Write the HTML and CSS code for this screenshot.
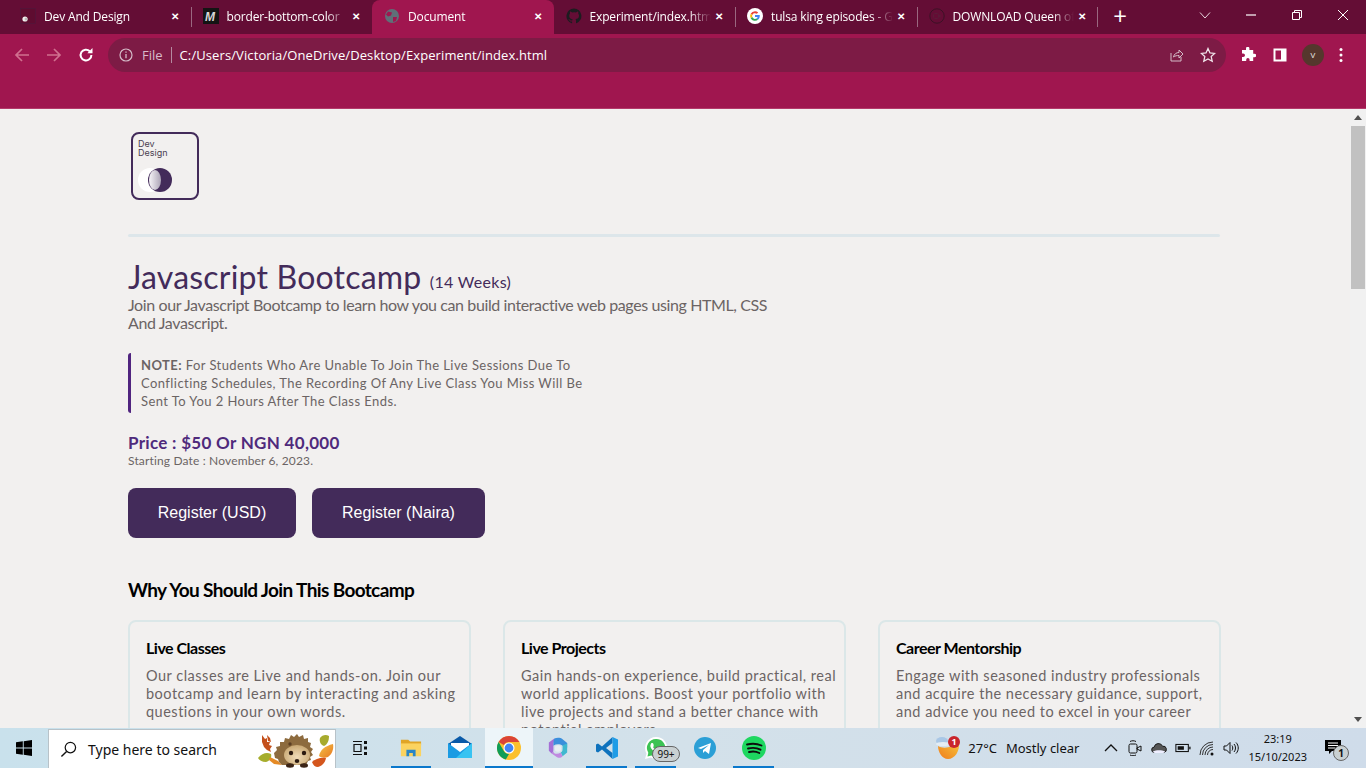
FILE: index.html
```html
<!DOCTYPE html>
<html lang="en">
<head>
<meta charset="utf-8">
<title>Document</title>
<link rel="stylesheet" href="styles.css">
</head>
<body>
<header class="browser">
  <div class="tabstrip">
    <div class="tab first">
      <svg class="fav" viewBox="0 0 16 16"><rect x=".5" y=".5" width="15" height="15" fill="#5e0c30" stroke="#4a1a3e" stroke-width=".5"/><circle cx="5" cy="11" r="2.600" fill="#f1f0ee"/><circle cx="6" cy="11" r="1.500" fill="#bbb"/></svg>
      <span class="tab-title">Dev And Design</span><span class="x">✕</span>
    </div>
    <div class="tab sep">
      <svg class="fav" viewBox="0 0 16 16"><rect width="16" height="16" fill="#141414"/><text x="2" y="13" class="m">M</text></svg>
      <span class="tab-title">border-bottom-color</span><span class="x">✕</span>
    </div>
    <div class="tab active">
      <svg class="fav" viewBox="0 0 16 16"><circle cx="8" cy="8" r="7" fill="#5f6f78"/><path d="M4 3.500l4 1-1 3-3 1-2-2zM9 9l4 0-1 4-3 1z" fill="#a0164f"/></svg>
      <span class="tab-title">Document</span><span class="x">✕</span>
    </div>
    <div class="tab">
      <svg class="fav" viewBox="0 0 16 16"><path d="M8 .5a7.600 7.600 0 0 0-2.400 14.800c.4.100.5-.2.500-.4v-1.400c-2.100.5-2.600-1-2.600-1-.3-.9-.8-1.100-.8-1.100-.7-.5 0-.5 0-.5.800.1 1.200.8 1.200.8.700 1.200 1.800.9 2.300.7.100-.5.300-.9.500-1.100-1.700-.2-3.500-.8-3.500-3.700 0-.8.300-1.500.8-2-.1-.2-.3-1 .1-2 0 0 .6-.2 2.100.8a7 7 0 0 1 3.800 0c1.500-1 2.100-.8 2.100-.8.400 1 .2 1.800.1 2 .5.500.8 1.200.8 2 0 2.900-1.800 3.500-3.500 3.700.3.200.5.700.5 1.400v2.100c0 .2.100.5.500.4A7.600 7.600 0 0 0 8 .5z" fill="#1d1c20"/></svg>
      <span class="tab-title">Experiment/index.html</span><span class="x">✕</span>
    </div>
    <div class="tab sep">
      <svg class="fav" viewBox="0 0 16 16"><circle cx="8" cy="8" r="8" fill="#fff"/><path d="M8 3.200a4.800 4.800 0 0 1 3.200 1.200L9.800 5.800A2.900 2.900 0 0 0 5.300 7L3.700 5.800A4.800 4.800 0 0 1 8 3.200z" fill="#ea4335"/><path d="M3.700 5.800 5.300 7a3 3 0 0 0 0 2l-1.600 1.200a4.800 4.800 0 0 1 0-4.400z" fill="#fbbc05"/><path d="M5.300 9a2.900 2.900 0 0 0 4.300 1.500l1.500 1.200A4.800 4.800 0 0 1 3.700 10.200z" fill="#34a853"/><path d="M12.800 8c0-.3 0-.6-.1-.9H8V9h2.700a2.400 2.400 0 0 1-1.100 1.500l1.500 1.200A4.800 4.800 0 0 0 12.800 8z" fill="#4285f4"/></svg>
      <span class="tab-title">tulsa king episodes - Google</span><span class="x">✕</span>
    </div>
    <div class="tab sep last">
      <svg class="fav" viewBox="0 0 16 16"><circle cx="8" cy="8" r="7.200" fill="none" stroke="#3c1226" stroke-width="1"/><rect x="4.500" y="5.500" width="5" height="5" rx="1" fill="none" stroke="#5c1a38"/><path d="M9.500 7.500l2-1.200v3.400l-2-1.200z" fill="#5c1a38"/></svg>
      <span class="tab-title">DOWNLOAD Queen of</span><span class="x">✕</span>
    </div>
    <span class="new-tab">+</span>
    <div class="win-ctrls">
      <svg class="w" viewBox="0 0 12 12"><path d="M1 3.500l5 5.500 5-5.500" fill="none" stroke="#e8d5dd"/></svg>
      <svg class="w" viewBox="0 0 12 12"><path d="M1 6h10" stroke="#fff" stroke-width="1.200"/></svg>
      <svg class="w" viewBox="0 0 12 12"><path d="M1.500 3.500h7v7h-7zM3.500 3.500v-2h7v7h-2" fill="none" stroke="#fff"/></svg>
      <svg class="w" viewBox="0 0 12 12"><path d="M1 1l10 10M11 1L1 11" stroke="#fff"/></svg>
    </div>
  </div>
  <div class="toolbar">
    <svg class="nav" viewBox="0 0 16 16"><path d="M15 8H2M8 2 2 8l6 6" fill="none" stroke="#d0708f" stroke-width="1.700"/></svg>
    <svg class="nav" viewBox="0 0 16 16"><path d="M1 8h13M8 2l6 6-6 6" fill="none" stroke="#d0708f" stroke-width="1.700"/></svg>
    <svg class="nav" viewBox="0 0 16 16"><path d="M13.400 8a5.400 5.400 0 1 1-1.600-3.800" fill="none" stroke="#fff" stroke-width="2"/><path d="M14.500 1v5.200H9.300z" fill="#fff"/></svg>
    <div class="omnibox">
      <svg class="info" viewBox="0 0 14 14"><circle cx="7" cy="7" r="6" fill="none" stroke="#d4bcc8" stroke-width="1.200"/><path d="M7 6v4.200M7 3.500v1.300" stroke="#d4bcc8" stroke-width="1.300"/></svg>
      <span class="scheme">File</span>
      <span class="url">C:/Users/Victoria/OneDrive/Desktop/Experiment/index.html</span>
      <svg class="omni-ico" viewBox="0 0 16 16"><path d="M3 6v8h10v-4M5.500 10c.5-3 3-4.500 5.500-4.500V3l4 4-4 4V8.500c-2 0-4 .3-5.500 1.500z" fill="none" stroke="#d4bcc8"/></svg>
      <svg class="omni-ico" viewBox="0 0 16 16"><path d="M8 1.500l2 4.400 4.700.5-3.500 3.200 1 4.700L8 11.900l-4.200 2.400 1-4.700L1.300 6.400 6 5.900z" fill="none" stroke="#f0e4ea" stroke-width="1.300"/></svg>
    </div>
    <svg class="tool" viewBox="0 0 16 16"><path d="M6 1.500a1.700 1.700 0 0 1 3.400 0V3h3.800v3.700h1.200a1.800 1.800 0 0 1 0 3.600h-1.200V14H9.600v-1.200a1.700 1.700 0 0 0-3.400 0V14H2V10h1.200a1.800 1.800 0 0 0 0-3.600H2V3h4z" fill="#fff"/></svg>
    <svg class="tool" viewBox="0 0 16 16"><rect x="1.500" y="1.500" width="13" height="13" fill="#fff"/><rect x="3.500" y="3.500" width="5.500" height="9" fill="#a0164f"/></svg>
    <span class="avatar">V</span>
    <svg class="dots" viewBox="0 0 4 16"><circle cx="2" cy="2.500" r="1.500" fill="#fff"/><circle cx="2" cy="8" r="1.500" fill="#fff"/><circle cx="2" cy="13.500" r="1.500" fill="#fff"/></svg>
  </div>
  <div class="bookmarks"></div>
</header>

<div class="viewport">
  <main class="page">
    <div class="logo">
      <span class="logo-text">Dev<br>Design</span>
      <span class="logo-mark"></span>
    </div>
    <hr class="rule">
    <h1 class="title">Javascript Bootcamp <small>(14 Weeks)</small></h1>
    <p class="lead">Join our Javascript Bootcamp to learn how you can build interactive web pages using HTML, CSS And Javascript.</p>
    <p class="note"><b>NOTE:</b> For Students Who Are Unable To Join The Live Sessions Due To Conflicting Schedules, The Recording Of Any Live Class You Miss Will Be Sent To You 2 Hours After The Class Ends.</p>
    <p class="price">Price : $50 Or NGN 40,000</p>
    <p class="date">Starting Date : November 6, 2023.</p>
    <div class="actions">
      <a class="btn usd">Register (USD)</a>
      <a class="btn ngn">Register (Naira)</a>
    </div>
    <h2 class="why">Why You Should Join This Bootcamp</h2>
    <section class="cards">
      <article class="card">
        <h3>Live Classes</h3>
        <p>Our classes are Live and hands-on. Join our bootcamp and learn by interacting and asking questions in your own words.</p>
      </article>
      <article class="card">
        <h3>Live Projects</h3>
        <p>Gain hands-on experience, build practical, real world applications. Boost your portfolio with live projects and stand a better chance with potential employers.</p>
      </article>
      <article class="card">
        <h3>Career Mentorship</h3>
        <p>Engage with seasoned industry professionals and acquire the necessary guidance, support, and advice you need to excel in your career</p>
      </article>
    </section>
  </main>
  <div class="scrollbar">
    <span class="arrow up"></span>
    <span class="thumb"></span>
    <span class="track"></span>
    <span class="arrow down"></span>
  </div>
</div>

<footer class="taskbar">
  <svg class="start" viewBox="0 0 16 16"><path d="M0 2.300 6.800 1.300V7.500H0zM7.700 1.200 16 0v7.500H7.700zM0 8.400h6.800v6.300L0 13.700zM7.700 8.400H16V16l-8.300-1.200z" fill="#000"/></svg>
  <div class="search">
    <svg class="lens" viewBox="0 0 18 18"><circle cx="11" cy="7" r="5.500" fill="none" stroke="#111" stroke-width="1.300"/><path d="M7 11l-5.500 5.500" stroke="#111" stroke-width="1.500"/></svg>
    <span class="search-text">Type here to search</span>
    <svg class="hog" viewBox="0 0 78 40">
      <defs>
        <radialGradient id="hogface" cx=".5" cy=".6" r=".6"><stop offset="0" stop-color="#f0dcb8"/><stop offset="1" stop-color="#c9a873"/></radialGradient>
        <linearGradient id="leaf" x1="0" y1="0" x2="1" y2="1"><stop offset="0" stop-color="#f3c24a"/><stop offset="1" stop-color="#e8791f"/></linearGradient>
      </defs>
      <path d="M5 6l3 4 2-1 0 4 3 0-1 3 3 1-2 3 1 3-4-2-3-3-2-5zM10 6l3 3 1 4-3-1z" fill="#c4501c"/>
      <path d="M1 29c4-5 9-6 13-4 1 3-1 7-5 8-4 0-7-2-8-4z" fill="#a6ad2c"/>
      <path d="M13 28l8 4 4 4-8-1-5-4z" fill="#e58a25"/>
      <path d="M17 24l3-3-1-3 4-1 0-4 4 0 1-4 4 1 2-4 3 2 3-3 2 3 4-2 1 4 4-1 0 4 3 1-1 4 3 2-2 3 2 3-3 2 1 3-3 1-2 4H25l-3-3-1-3-3-1z" fill="#8d6b3e"/>
      <ellipse cx="40" cy="26" rx="13" ry="10" fill="url(#hogface)"/>
      <circle cx="33" cy="15" r="1.700" fill="#5c3f22"/>
      <circle cx="34" cy="24" r="2.200" fill="#2b1a10"/><circle cx="47" cy="24" r="2.200" fill="#2b1a10"/><ellipse cx="40" cy="32" rx="2.300" ry="2" fill="#2b1a10"/>
      <ellipse cx="33" cy="36.500" rx="4" ry="2.200" fill="#3b2416"/><ellipse cx="47" cy="36.500" rx="4" ry="2.200" fill="#3b2416"/>
      <path d="M63 9c2-3 6-4 9-2 0 4-1 8-5 10-3-1-5-4-4-8z" fill="#a7ab2e"/>
      <path d="M62 27c1-6 6-10 14-12 1 5-1 10-5 13-3 1-7 1-9-1z" fill="url(#leaf)"/>
      <path d="M55 33c3-3 9-5 14-4-1 5-4 8-8 9-3 0-5-2-6-5z" fill="#d4561d"/>
    </svg>
  </div>
  <svg class="tv" viewBox="0 0 16 16"><path d="M1 1.500h9M1 14.500h9M2 4.500h7v7H2z" fill="none" stroke="#111" stroke-width="1.200"/><rect x="12" y="1" width="3" height="3" fill="#111"/><rect x="12" y="6.500" width="3" height="3" fill="#111"/><rect x="12" y="12" width="3" height="3" fill="#111"/></svg>
  <div class="pin running folder"><svg class="app small" viewBox="0 0 24 24"><path d="M1 3h8l2 2h12v4H1z" fill="#e0a526"/><path d="M1 7h22v14H1z" fill="#fbd35f"/><path d="M7 21v-7h10v7h-3v-3.500h-4V21z" fill="#2a86c6"/></svg></div>
  <div class="pin mail"><svg class="app" viewBox="0 0 24 24"><path d="M0 8 12 0l12 8v3H0z" fill="#0a5aa8"/><path d="M3 7h18v7l-9 5-9-5z" fill="#fff"/><path d="M0 7l12 9 12-9v15H0z" fill="#1a9be3"/><path d="M24 7v15H8z" fill="#38c3f2"/></svg></div>
  <div class="pin running chrome"><svg class="app" viewBox="0 0 24 24"><circle cx="12" cy="12" r="12" fill="#fbc02d"/><path d="M12 0a12 12 0 0 1 10.400 6H12a6 6 0 0 0-5.200 3L1.600 6A12 12 0 0 1 12 0z" fill="#db4437"/><path d="M1.600 6l5.200 9a6 6 0 0 0 5.200 3l-3.200 5.600A12 12 0 0 1 1.600 6z" fill="#0f9d58"/><circle cx="12" cy="12" r="5.500" fill="#fff"/><circle cx="12" cy="12" r="4.400" fill="#4285f4"/></svg></div>
  <div class="pin m365"><svg class="app small" viewBox="0 0 24 24"><path d="M8 1.500 2 6v9l3 3c2-1 2-3 2-5V9c0-3 1-5 1-7.500z" fill="#a56fd6"/><path d="M8 1.500c3-1 7-1 9 1l5 4v5l-5-2c-3-2-7-2-10 0 0-3 0-6 1-8z" fill="#3a8fdc"/><path d="M22 7v10l-5 4-2-4c2-1 2-3 2-5V9z" fill="#3fb8cf"/><path d="M5 18l6 4c2 1 4 1 6-1l-2-4c-3 2-7 2-8-1z" fill="#c08ae0"/><circle cx="12" cy="12.500" r="3.500" fill="#e7edf2"/></svg></div>
  <div class="pin running vscode"><svg class="app" viewBox="0 0 24 24"><path d="M17.500 1 7 10.500 3 7.400 1 8.500v7l2 1.100 4-3.100L17.500 23v-6L11 12l6.500-5z" fill="#0e72bd"/><path d="M17.500 1 23 3.500v17L17.500 23z" fill="#1f9ce6"/></svg></div>
  <div class="pin running wa">
    <svg class="app" viewBox="0 0 24 24"><path d="M12 1a11 11 0 0 0-9.500 16.500L1 23l5.700-1.500A11 11 0 1 0 12 1z" fill="#fff"/><path d="M12 3a9 9 0 0 0-7.700 13.700L3.500 20.500l3.900-1A9 9 0 1 0 12 3z" fill="#3cc354"/><path d="M8.500 7c1 0 1.500 3 1 3.500s-.5 1 .5 2 2 1.500 2.500 1 3 0 3 1-2 2-4 1.500-6-4.500-5-7 1-2 2-2z" fill="#fff"/></svg>
    <span class="badge">99+</span>
  </div>
  <div class="pin tg"><svg class="app" viewBox="0 0 24 24"><circle cx="12" cy="12" r="11" fill="#2b9fd6"/><path d="M5 12l13-5-2 11-4-3-2 2v-3l6-5-8 4z" fill="#fff"/></svg></div>
  <div class="pin running spotify"><svg class="app" viewBox="0 0 24 24"><circle cx="12" cy="12" r="12" fill="#1ed760"/><path d="M5 8.500c5-1.300 10-1 14.500 1M6 12.500c4.500-1 9-.7 12.500 1.200M7 16c3.500-.8 7.300-.6 10.300 1" fill="none" stroke="#0d0d0d" stroke-width="1.900" stroke-linecap="round"/></svg></div>
  <div class="tray">
    <span class="weather">
      <svg class="wx" viewBox="0 0 24 24"><defs><linearGradient id="sun" x1="1" y1="0" x2="0" y2="1"><stop offset="0" stop-color="#f8c53a"/><stop offset="1" stop-color="#ee7c1e"/></linearGradient></defs><path d="M2 10c5 3 14 2 21-4 1 9-4 17-11 17C6 23 2 16 2 10z" fill="url(#sun)"/><ellipse cx="6" cy="5" rx="6" ry="4" fill="#a9c7e6"/><ellipse cx="7" cy="8" rx="7" ry="2" fill="#e4edf5"/><circle cx="18" cy="6" r="6" fill="#c9252c"/><text x="18" y="9" class="wx-num">1</text></svg>
      <span>27°C</span><span class="wx-desc">Mostly clear</span>
    </span>
    <svg class="tray-ico" viewBox="0 0 16 16"><path d="M2 11l6-6 6 6" fill="none" stroke="#111" stroke-width="1.300"/></svg>
    <svg class="tray-ico" viewBox="0 0 16 16"><rect x="2" y="4" width="8" height="9" rx="1.500" fill="none" stroke="#111"/><path d="M10 8l4-2v5l-4-2zM3 1.500c2-1 4-1 6 0M3 15c2 1 4 1 6 0" fill="none" stroke="#111"/></svg>
    <svg class="tray-ico" viewBox="0 0 18 16"><path d="M4 13a3 3 0 0 1-.5-6 5 5 0 0 1 9.500-1 3.500 3.500 0 0 1 1.500 7z" fill="#555" stroke="#111"/><path d="M2 12c4-2 10-2 14 0l-2 1.500H4z" fill="#eef"/></svg>
    <svg class="tray-ico" viewBox="0 0 18 16"><rect x="1" y="4" width="14" height="8" fill="none" stroke="#111" stroke-width="1.200"/><rect x="3" y="6" width="7" height="4" fill="#111"/><rect x="16" y="6.500" width="1.500" height="3" fill="#111"/></svg>
    <svg class="tray-ico" viewBox="0 0 16 16"><path d="M1 15a13 13 0 0 1 13-13M3.500 15A10.500 10.500 0 0 1 14 4.500M6 15a8 8 0 0 1 8-8M8.500 15A5.500 5.500 0 0 1 14 9.500" fill="none" stroke="#333"/><circle cx="13" cy="14" r="1.500" fill="#111"/></svg>
    <svg class="tray-ico" viewBox="0 0 16 16"><path d="M1 6h2.500L7 2.500v11L3.500 10H1z" fill="none" stroke="#111"/><path d="M9 5.500c1 1.500 1 3.500 0 5M11 4c2 2 2 6 0 8M13 2.500c3 3 3 8 0 11" fill="none" stroke="#111"/></svg>
    <div class="clock"><span>23:19</span><span>15/10/2023</span></div>
    <div class="notif">
      <svg class="bubble" viewBox="0 0 16 16"><path d="M0 1h16v11H7l-3 3v-3H0z" fill="#000"/><path d="M3 4h10M3 6.500h10M3 9h7" stroke="#fff"/></svg>
      <span class="notif-n">1</span>
    </div>
  </div>
</footer>
</body>
</html>
```
FILE: styles.css
```css
* { box-sizing: border-box; }
html, body { margin: 0; height: 100%; }
body {
  display: flex;
  flex-direction: column;
  height: 768px;
  overflow: hidden;
  background: #f2f0ef;
  font-family: "Lato", sans-serif;
}

/* browser chrome */
.browser { flex: none; font-family: "Open Sans", "Noto Sans", sans-serif; }
.tabstrip {
  height: 34px;
  display: flex;
  align-items: stretch;
  padding-left: 9px;
  background: #640d35;
  color: #fff;
}
.tab {
  position: relative;
  width: 181.500px;
  display: flex;
  align-items: center;
  padding: 0 8px 2px 12px;
  font-size: 12px;
  letter-spacing: -0.150px;
}
.tab.sep::before {
  content: "";
  position: absolute;
  left: 0;
  top: 7px;
  bottom: 7px;
  width: 1px;
  background: #9a6880;
}
.tab.last::after {
  content: "";
  position: absolute;
  right: 0;
  top: 7px;
  bottom: 7px;
  width: 1px;
  background: #9a6880;
}
.tab.active {
  background: #a0164f;
  border-radius: 8px 8px 0 0;
}
.tab.first { padding-left: 11px; }
.fav { width: 16px; height: 16px; flex: none; margin-right: 8px; }
.m { font: italic 700 12px "Liberation Sans", sans-serif; fill: #d8d8d8; }
.tab-title {
  flex: 1;
  overflow: hidden;
  white-space: nowrap;
  margin-right: 4px;
  -webkit-mask-image: linear-gradient(90deg, #000 82%, transparent);
  mask-image: linear-gradient(90deg, #000 82%, transparent);
}
.x { flex: none; width: 16px; margin-left: -4px; font-size: 10px; text-align: center; font-weight: 700; }
.new-tab { width: 44px; text-align: center; font-size: 24px; line-height: 32px; font-weight: 400; }
.win-ctrls { margin-left: auto; display: flex; align-items: center; gap: 34px; padding: 0 17px 0 0; }
.w { width: 12px; height: 12px; margin-top: -5px; }

.toolbar {
  height: 42px;
  display: flex;
  align-items: center;
  padding: 0 14px 0 14px;
  background: #a0164f;
}
.nav { width: 16px; height: 16px; margin-right: 16px; flex: none; }
.omnibox {
  width: 1118px;
  height: 34px;
  margin: 0 14px 0 -2px;
  display: flex;
  align-items: center;
  padding: 0 10px 0 11px;
  border-radius: 17px;
  background: #7d1b45;
  font-size: 13px;
  color: #fff;
}
.info { width: 14px; height: 14px; margin-right: 9px; }
.scheme {
  color: #d8bccb;
  padding-right: 8px;
  margin-right: 8px;
  border-right: 1px solid #b58aa0;
  line-height: 16px;
}
.url { flex: 1; letter-spacing: 0.100px; }
.omni-ico { width: 16px; height: 16px; margin-left: 16px; }
.tool { width: 16px; height: 16px; margin-right: 16px; flex: none; }
.avatar {
  width: 22px;
  height: 22px;
  margin: 0 15px 0 -2px;
  flex: none;
  border-radius: 50%;
  background: #55372d;
  color: #eee;
  font-size: 8px;
  line-height: 22px;
  text-align: center;
}
.dots { width: 4px; height: 16px; flex: none; }
.bookmarks { height: 33px; background: #a0164f; border-bottom: 1px solid #b33a6a; }

/* page */
.viewport { flex: 1; min-height: 0; display: flex; overflow: hidden; background: #f2f0ef; }
.page { flex: 1; min-width: 0; padding: 23px 130px 0 128px; }
.logo {
  width: 68px;
  height: 68px;
  margin-left: 3px;
  padding: 5px;
  display: flex;
  flex-direction: column;
  align-items: flex-start;
  border: 2px solid #432b5a;
  border-radius: 8px;
  isolation: isolate;
}
.logo-text { font: 9px/9px "Inter", "Liberation Sans", sans-serif; color: #4a4050; }
.logo-mark {
  position: relative;
  width: 24px;
  height: 24px;
  margin: 11px 0 0 10px;
  border-radius: 50%;
  background: #432b5a;
}
.logo-mark::before {
  content: "";
  position: absolute;
  left: -10px;
  top: 0;
  width: 24px;
  height: 24px;
  border-radius: 12px;
  background: #fff;
  z-index: -1;
}
.logo-mark::after {
  content: "";
  position: absolute;
  left: 1px;
  top: 2px;
  width: 12px;
  height: 20px;
  border-radius: 50%;
  background: linear-gradient(90deg, #f7f5f8, #aca4b6);
}
.rule {
  height: 3px;
  margin: 34px 0 0;
  border: 0;
  border-radius: 2px;
  background: #dde6ea;
}
.title {
  margin: 28px 0 0;
  font-size: 32px;
  line-height: 24px;
  font-weight: 400;
  letter-spacing: 0.200px;
  color: #432b5a;
}
.title small { font-size: 16px; letter-spacing: 0.300px; vertical-align: 1px; }
.lead {
  width: 645px;
  margin: 2px 0 0;
  font-size: 16px;
  line-height: 18px;
  letter-spacing: -0.390px;
  color: #6b6464;
}
.note {
  width: 470px;
  margin: 21px 0 0;
  padding: 3px 0 3px 10px;
  border-left: 3px solid #50247f;
  border-radius: 3px 0 0 3px;
  font-size: 13px;
  line-height: 18px;
  letter-spacing: 0.430px;
  color: #6b6464;
}
.price {
  margin: 19px 0 0;
  font-size: 17px;
  line-height: 21px;
  font-weight: 700;
  letter-spacing: 0.300px;
  color: #4f2a7c;
}
.date { margin: 1px 0 0; font-size: 12px; line-height: 14px; letter-spacing: 0.150px; color: #6b6464; }
.actions { display: flex; gap: 16px; margin-top: 20px; }
.btn {
  height: 50px;
  display: flex;
  align-items: center;
  justify-content: center;
  border-radius: 8px;
  background: #432b5a;
  color: #fff;
  font: 16px "Liberation Sans", sans-serif;
}
.btn.usd { width: 168px; }
.btn.ngn { width: 173px; }
.why {
  margin: 39px 0 0;
  font-size: 19px;
  line-height: 26px;
  font-weight: 700;
  letter-spacing: -0.630px;
  color: #000;
}
.cards {
  display: grid;
  grid-template-columns: repeat(3, 343px);
  column-gap: 32px;
  margin-top: 17px;
}
.card {
  height: 170px;
  padding: 16px 0 0 16px;
  border: 2px solid #dbe7e8;
  border-radius: 8px;
}
.card h3 {
  margin: 0 0 9px;
  font-size: 16px;
  line-height: 20px;
  font-weight: 700;
  letter-spacing: -0.500px;
  color: #000;
}
.card p {
  margin: 0;
  font-size: 14.500px;
  line-height: 18px;
  letter-spacing: 0.500px;
  color: #6b6464;
}

/* scrollbar */
.scrollbar { flex: none; width: 16px; display: flex; flex-direction: column; background: #f1f1f1; }
.arrow { height: 17px; flex: none; display: flex; align-items: center; justify-content: center; }
.arrow::before { content: ""; border-left: 4px solid transparent; border-right: 4px solid transparent; }
.arrow.up::before { border-bottom: 5px solid #505050; }
.arrow.down::before { border-top: 5px solid #505050; }
.thumb { height: 163px; margin: 0 1px; flex: none; background: #c1c1c1; }
.track { flex: 1; }

/* taskbar */
.taskbar {
  flex: none;
  height: 40px;
  display: flex;
  align-items: center;
  background: linear-gradient(90deg, #c9e1ec, #d3e1ea 50%, #cfdcea);
  font-family: "Noto Sans", "Open Sans", sans-serif;
  color: #111;
}
.start { width: 16px; height: 16px; margin: 0 16px 0 16px; flex: none; }
.search {
  width: 288px;
  height: 39px;
  margin-top: 1px;
  display: flex;
  align-items: center;
  padding-left: 11px;
  background: #fff;
  border: 1px solid #b8c2c8;
  border-bottom: 0;
  font-size: 14px;
}
.lens { width: 17px; height: 17px; margin-right: 11px; flex: none; }
.search-text { flex: 1; white-space: nowrap; }
.hog { width: 78px; height: 40px; margin-top: -1px; flex: none; }
.tv { width: 16px; height: 16px; margin: 0 15px 0 16px; flex: none; }
.pin {
  position: relative;
  width: 49px;
  height: 40px;
  flex: none;
  display: flex;
  align-items: center;
  justify-content: center;
}
.pin.running::after {
  content: "";
  position: absolute;
  left: 4px;
  right: 4px;
  bottom: 0;
  height: 2px;
  background: #0a78cc;
}
.folder { width: 51px; padding-left: 4px; }
.folder.running::after { left: 8px; right: 3px; }
.mail { width: 51px; }
.chrome { width: 48px; background: #edf5f9; }
.chrome.running::after { left: 0; right: 0; }
.app { width: 24px; height: 24px; }
.app.small { width: 22px; height: 22px; }
.badge {
  position: absolute;
  left: 21px;
  top: 18px;
  width: 28px;
  height: 16px;
  border: 1px solid #666;
  border-radius: 8px;
  background: #c9d0d2;
  font-size: 10px;
  line-height: 14px;
  text-align: center;
  color: #111;
}
.tray { margin-left: auto; display: flex; align-items: center; height: 40px; font-size: 13px; }
.weather { display: flex; align-items: center; gap: 9px; margin-right: 24px; }
.wx { width: 24px; height: 24px; margin-right: -1px; }
.wx-num { font-size: 9px; font-weight: 700; fill: #fff; text-anchor: middle; }
.wx-desc { letter-spacing: 0; }
.tray-ico { width: 16px; height: 16px; margin-right: 8px; flex: none; }
.clock {
  display: flex;
  flex-direction: column;
  align-items: center;
  margin: 0 18px 0 1px;
  font-size: 11px;
  line-height: 18px;
}
.notif { position: relative; width: 24px; height: 24px; margin-right: 17px; }
.bubble { width: 16px; height: 16px; margin-top: 3px; display: block; }
.notif-n {
  position: absolute;
  left: 8px;
  top: 9px;
  width: 16px;
  height: 16px;
  border: 1px solid #666;
  border-radius: 50%;
  background: #c9d0d2;
  font-size: 10px;
  font-weight: 700;
  line-height: 14px;
  text-align: center;
}
```
